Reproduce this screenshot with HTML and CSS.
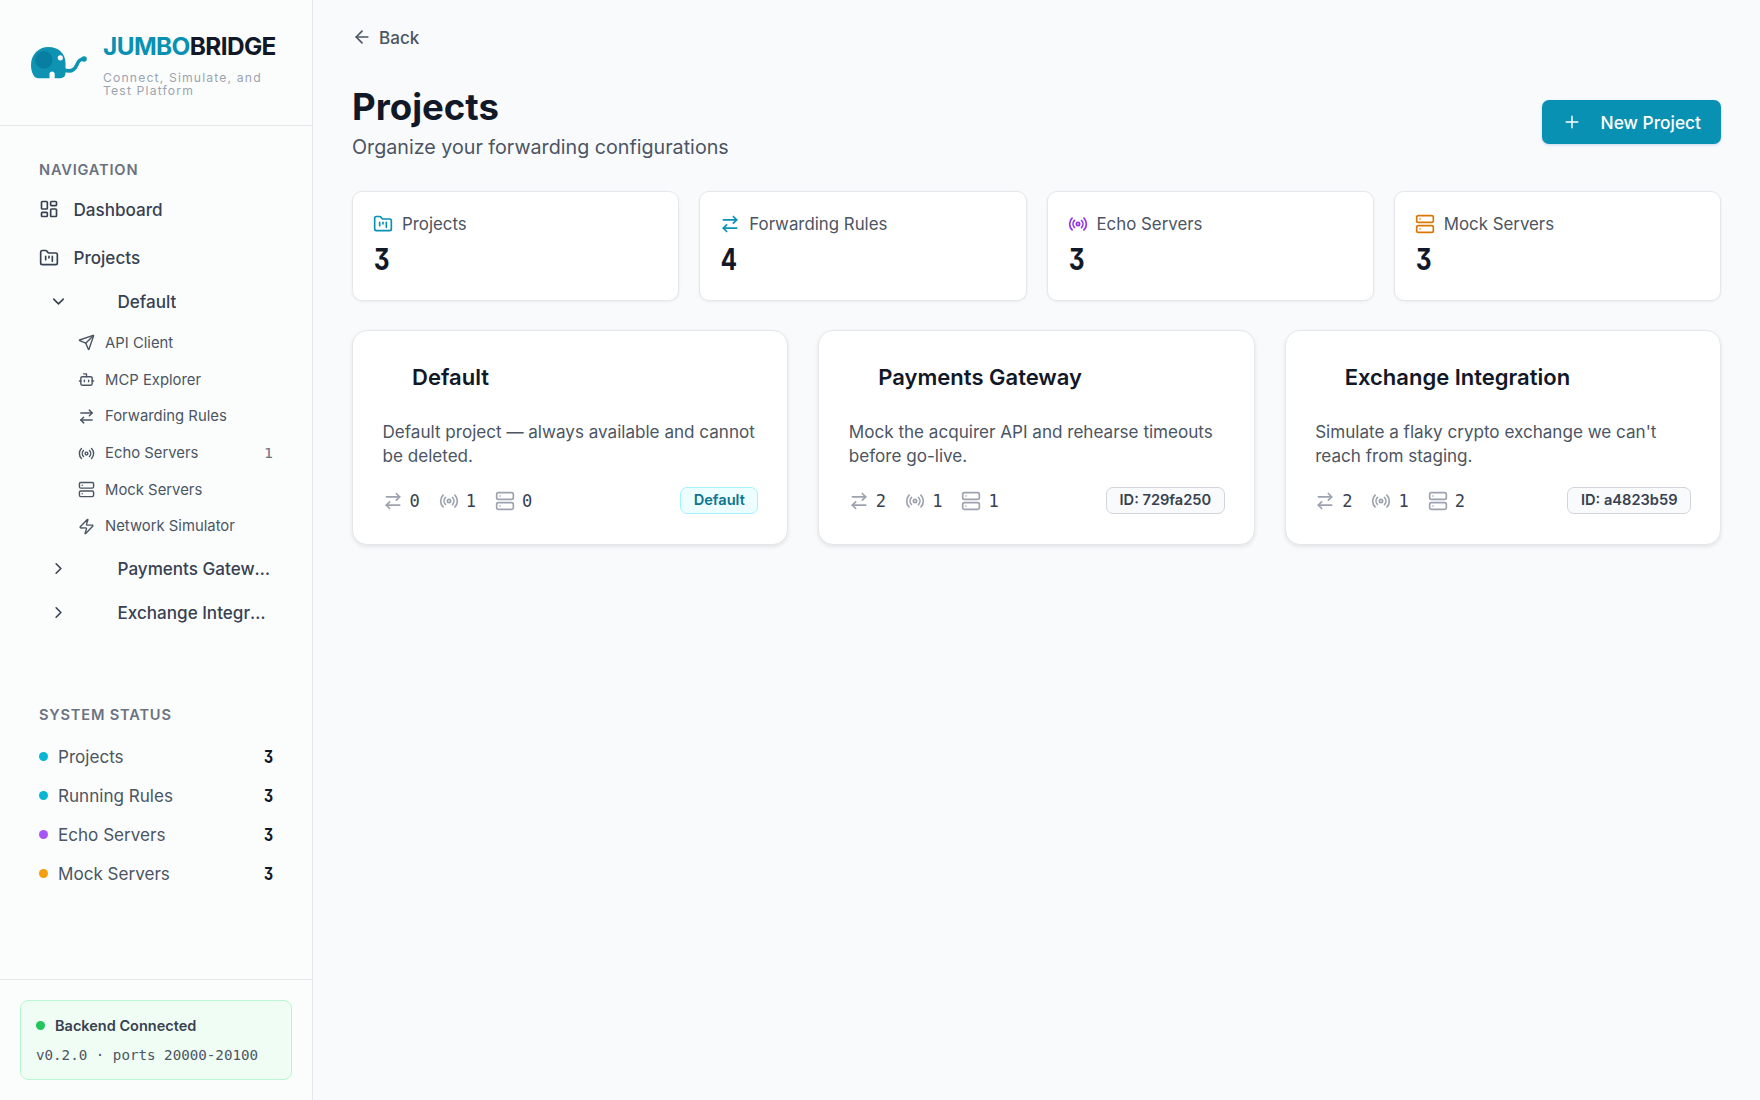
FILE: index.html
```html
<!DOCTYPE html>
<html lang="en">
<head>
    <meta charset="UTF-8">
    <meta name="viewport" content="width=device-width, initial-scale=1.0">
    <title>JumboBridge - Projects</title>
    <link rel="stylesheet" href="styles.css">
</head>
<body>
    <!-- Icon definitions -->
    <svg class="sprite" xmlns="http://www.w3.org/2000/svg">
        <symbol id="i-dashboard" viewBox="0 0 24 24"><rect x="3" y="3" width="7" height="9" rx="1"/><rect x="14" y="3" width="7" height="5" rx="1"/><rect x="14" y="12" width="7" height="9" rx="1"/><rect x="3" y="16" width="7" height="5" rx="1"/></symbol>
        <symbol id="i-folder" viewBox="0 0 24 24"><path d="M4 20h16a2 2 0 0 0 2-2V8a2 2 0 0 0-2-2h-7.93a2 2 0 0 1-1.66-.9l-.82-1.2A2 2 0 0 0 7.93 3H4a2 2 0 0 0-2 2v13c0 1.1.9 2 2 2Z"/><path d="M8 10v4M12 10v2M16 10v6"/></symbol>
        <symbol id="i-send" viewBox="0 0 24 24"><path d="M14.536 21.686a.5.5 0 0 0 .937-.024l6.5-19a.496.496 0 0 0-.635-.635l-19 6.5a.5.5 0 0 0-.024.937l7.93 3.18a2 2 0 0 1 1.112 1.11z"/><path d="m21.854 2.147-10.94 10.939"/></symbol>
        <symbol id="i-bot" viewBox="0 0 24 24"><path d="M12 8V4H8"/><rect x="4" y="8" width="16" height="12" rx="2"/><path d="M2 14h2M20 14h2M15 13v2M9 13v2"/></symbol>
        <symbol id="i-swap" viewBox="0 0 24 24"><path d="m16 3 4 4-4 4"/><path d="M20 7H4"/><path d="m8 21-4-4 4-4"/><path d="M4 17h16"/></symbol>
        <symbol id="i-radio" viewBox="0 0 24 24"><path d="M4.9 19.1C1 15.2 1 8.8 4.9 4.9"/><path d="M7.8 16.2c-2.3-2.3-2.3-6.1 0-8.5"/><circle cx="12" cy="12" r="2"/><path d="M16.2 7.8c2.3 2.3 2.3 6.1 0 8.5"/><path d="M19.1 4.9C23 8.8 23 15.1 19.1 19"/></symbol>
        <symbol id="i-server" viewBox="0 0 24 24"><rect x="2" y="2" width="20" height="8" rx="2"/><rect x="2" y="14" width="20" height="8" rx="2"/><path d="M6 6h.01M6 18h.01"/></symbol>
        <symbol id="i-zap" viewBox="0 0 24 24"><path d="M4 14a1 1 0 0 1-.78-1.63l9.9-10.2a.5.5 0 0 1 .86.46l-1.92 6.02A1 1 0 0 0 13 10h7a1 1 0 0 1 .78 1.63l-9.9 10.2a.5.5 0 0 1-.86-.46l1.92-6.02A1 1 0 0 0 11 14z"/></symbol>
        <symbol id="i-down" viewBox="0 0 24 24"><path d="m6 9 6 6 6-6"/></symbol>
        <symbol id="i-right" viewBox="0 0 24 24"><path d="m9 18 6-6-6-6"/></symbol>
        <symbol id="i-back" viewBox="0 0 24 24"><path d="m12 19-7-7 7-7"/><path d="M19 12H5"/></symbol>
        <symbol id="i-plus" viewBox="0 0 24 24"><path d="M5 12h14M12 5v14"/></symbol>
    </svg>

    <div class="app">
        <aside class="sidebar">
            <div class="brand">
                <svg class="logo" viewBox="0 0 58 36">
                    <path class="trunk" d="M33 23.5C41 27 44.500 24 46.500 19.500C48.500 15 50 13 54 13"/>
                    <circle class="skin" cx="54" cy="13" r="2.800"/>
                    <path class="skin" d="M5.500 31.500C2.500 29 1 24 1 19C1 8.500 8.500 1 18.500 1C28.500 1 35.500 7.500 35.500 17V27C35.500 30 33.500 32.200 30.500 32.200H24.700V28C24.700 24.500 19.500 24.500 19.500 28V32.200H9C7.500 32.200 6.500 32.200 5.500 31.500Z"/>
                    <circle class="ear" cx="13.800" cy="13.800" r="8.800"/>
                    <circle class="eye" cx="30.300" cy="11.800" r="2.600"/>
                </svg>
                <div class="brand-text">
                    <div class="brand-name"><span>JUMBO</span>BRIDGE</div>
                    <div class="tagline">Connect, Simulate, and Test Platform</div>
                </div>
            </div>

            <nav class="nav">
                <h2 class="section-title">NAVIGATION</h2>
                <a class="nav-item"><svg class="icon"><use href="#i-dashboard"/></svg>Dashboard</a>
                <a class="nav-item"><svg class="icon"><use href="#i-folder"/></svg>Projects</a>
                <div class="tree">
                    <a class="tree-item"><svg class="icon"><use href="#i-down"/></svg><span>Default</span></a>
                    <div class="children">
                        <a class="child"><svg class="icon"><use href="#i-send"/></svg>API Client</a>
                        <a class="child"><svg class="icon"><use href="#i-bot"/></svg>MCP Explorer</a>
                        <a class="child"><svg class="icon"><use href="#i-swap"/></svg>Forwarding Rules</a>
                        <a class="child"><svg class="icon"><use href="#i-radio"/></svg>Echo Servers<span class="count">1</span></a>
                        <a class="child"><svg class="icon"><use href="#i-server"/></svg>Mock Servers</a>
                        <a class="child"><svg class="icon"><use href="#i-zap"/></svg>Network Simulator</a>
                    </div>
                    <a class="tree-item"><svg class="icon"><use href="#i-right"/></svg><span>Payments Gateway</span></a>
                    <a class="tree-item"><svg class="icon"><use href="#i-right"/></svg><span>Exchange Integration</span></a>
                </div>
            </nav>

            <section class="status">
                <h2 class="section-title">SYSTEM STATUS</h2>
                <div class="status-row"><i class="dot cyan"></i>Projects<b>3</b></div>
                <div class="status-row"><i class="dot cyan"></i>Running Rules<b>3</b></div>
                <div class="status-row"><i class="dot purple"></i>Echo Servers<b>3</b></div>
                <div class="status-row"><i class="dot amber"></i>Mock Servers<b>3</b></div>
            </section>

            <div class="sidebar-footer">
                <div class="backend">
                    <div class="backend-state"><i class="dot green"></i>Backend Connected</div>
                    <div class="backend-info">v0.2.0 · ports 20000-20100</div>
                </div>
            </div>
        </aside>

        <main class="main">
            <a class="back"><svg class="icon"><use href="#i-back"/></svg>Back</a>

            <header class="page-header">
                <div>
                    <h1>Projects</h1>
                    <p>Organize your forwarding configurations</p>
                </div>
                <button class="btn-new"><svg class="icon"><use href="#i-plus"/></svg>New Project</button>
            </header>

            <div class="stats">
                <div class="stat">
                    <div class="stat-label"><svg class="icon teal"><use href="#i-folder"/></svg>Projects</div>
                    <div class="stat-value">3</div>
                </div>
                <div class="stat">
                    <div class="stat-label"><svg class="icon teal"><use href="#i-swap"/></svg>Forwarding Rules</div>
                    <div class="stat-value">4</div>
                </div>
                <div class="stat">
                    <div class="stat-label"><svg class="icon violet"><use href="#i-radio"/></svg>Echo Servers</div>
                    <div class="stat-value">3</div>
                </div>
                <div class="stat">
                    <div class="stat-label"><svg class="icon orange"><use href="#i-server"/></svg>Mock Servers</div>
                    <div class="stat-value">3</div>
                </div>
            </div>

            <div class="projects">
                <article class="project">
                    <h3>Default</h3>
                    <p>Default project — always available and cannot be deleted.</p>
                    <div class="project-footer">
                        <span class="metric"><svg class="icon"><use href="#i-swap"/></svg>0</span>
                        <span class="metric"><svg class="icon"><use href="#i-radio"/></svg>1</span>
                        <span class="metric"><svg class="icon"><use href="#i-server"/></svg>0</span>
                        <span class="badge badge-default">Default</span>
                    </div>
                </article>
                <article class="project">
                    <h3>Payments Gateway</h3>
                    <p>Mock the acquirer API and rehearse timeouts before go-live.</p>
                    <div class="project-footer">
                        <span class="metric"><svg class="icon"><use href="#i-swap"/></svg>2</span>
                        <span class="metric"><svg class="icon"><use href="#i-radio"/></svg>1</span>
                        <span class="metric"><svg class="icon"><use href="#i-server"/></svg>1</span>
                        <span class="badge">ID: 729fa250</span>
                    </div>
                </article>
                <article class="project">
                    <h3>Exchange Integration</h3>
                    <p>Simulate a flaky crypto exchange we can't reach from staging.</p>
                    <div class="project-footer">
                        <span class="metric"><svg class="icon"><use href="#i-swap"/></svg>2</span>
                        <span class="metric"><svg class="icon"><use href="#i-radio"/></svg>1</span>
                        <span class="metric"><svg class="icon"><use href="#i-server"/></svg>2</span>
                        <span class="badge">ID: a4823b59</span>
                    </div>
                </article>
            </div>
        </main>
    </div>
</body>
</html>
```
FILE: styles.css
```css
* {
    box-sizing: border-box;
}
body {
    margin: 0;
    font-family: Inter, "Liberation Sans", sans-serif;
    font-size: 17.08px;
    color: #374151;
    background-color: #f9fafc;
}
h1, h2, h3, p {
    margin: 0;
}
.sprite {
    display: none;
}
.icon {
    width: 20px;
    height: 20px;
    flex-shrink: 0;
    fill: none;
    stroke: currentColor;
    stroke-width: 2;
    stroke-linecap: round;
    stroke-linejoin: round;
}
.app {
    display: flex;
    height: 100vh;
}

/* Sidebar */
.sidebar {
    display: flex;
    flex-direction: column;
    width: 313px;
    flex-shrink: 0;
    background-color: #fbfdfd;
    border-right: 1px solid #e5e7eb;
}
.brand {
    display: flex;
    align-items: center;
    height: 126px;
    padding: 0 29px 0 30px;
    border-bottom: 1px solid #e5e7eb;
}
.logo {
    width: 58px;
    height: 36px;
    margin-top: 2px;
    flex-shrink: 0;
}
.skin {
    fill: #0e93b3;
}
.trunk {
    fill: none;
    stroke: #0e93b3;
    stroke-width: 3.6;
    stroke-linecap: round;
}
.ear {
    fill: #087ea1;
}
.eye {
    fill: #fff;
}
.brand-text {
    margin-left: 15px;
}
.brand-name {
    font-size: 24.4px;
    line-height: 36px;
    font-weight: 700;
    letter-spacing: -0.61px;
    color: #111827;
}
.brand-name span {
    color: #0891b2;
}
.tagline {
    margin-top: 8px;
    font-size: 12.2px;
    line-height: 12.2px;
    letter-spacing: 1.15px;
    color: #9ca3af;
}
.section-title {
    font-size: 14.64px;
    line-height: 20px;
    font-weight: 600;
    letter-spacing: 0.8px;
    color: #6b7280;
}
.nav {
    padding: 34px 39px 0;
}
.nav-item {
    display: flex;
    align-items: center;
    gap: 14.5px;
    height: 44px;
    margin-bottom: 4.6px;
    font-weight: 500;
}
.nav .section-title {
    margin-bottom: 7px;
}
.tree {
    margin-top: -4.6px;
}
.tree-item {
    display: flex;
    align-items: center;
    height: 44px;
    padding-left: 10px;
    font-weight: 500;
}
.tree-item .icon {
    width: 19px;
    height: 19px;
}
.tree-item span {
    max-width: 154px;
    margin-left: 49.5px;
    overflow: hidden;
    text-overflow: ellipsis;
    white-space: nowrap;
}
.children {
    padding: 1px 0 2px;
}
.child {
    display: flex;
    align-items: center;
    gap: 10px;
    height: 36.7px;
    padding-left: 39px;
    font-size: 14.85px;
    color: #4b5563;
}
.child .icon {
    width: 17px;
    height: 17px;
}
.count {
    margin-left: auto;
    font-family: "DejaVu Sans Mono", monospace;
    color: #6b7280;
}
.status {
    margin-top: 70px;
    padding: 0 39px;
}
.status .section-title {
    margin-bottom: 12px;
}
.status-row {
    display: flex;
    align-items: center;
    height: 39.1px;
    color: #4b5563;
}
.status-row b {
    margin-left: auto;
    font-weight: 700;
    font-feature-settings: "cv09", "tnum";
    color: #111827;
    transform: scaleX(0.83);
    transform-origin: right;
}
.dot {
    width: 9px;
    height: 9px;
    margin-right: 10px;
    border-radius: 50%;
}
.cyan { background-color: #06b6d4; }
.purple { background-color: #a855f7; }
.amber { background-color: #f59e0b; }
.green { background-color: #22c55e; }
.sidebar-footer {
    margin-top: auto;
    padding: 20px;
    border-top: 1px solid #e5e7eb;
}
.backend {
    height: 80px;
    padding: 14px 15px;
    background-color: #f0fdf4;
    border: 1px solid #bbf7d0;
    border-radius: 8px;
}
.backend-state {
    display: flex;
    align-items: center;
    height: 20px;
    font-size: 14.5px;
    font-weight: 600;
}
.backend-info {
    margin-top: 10px;
    font-family: "DejaVu Sans Mono", monospace;
    font-size: 14.2px;
    line-height: 20px;
    white-space: nowrap;
    color: #4b5563;
}

/* Main content */
.main {
    flex: 1;
    padding: 22px 39px;
}
.back {
    display: flex;
    align-items: center;
    gap: 7px;
    height: 30px;
    font-weight: 500;
    color: #4b5563;
}
.page-header {
    display: flex;
    justify-content: space-between;
    align-items: center;
    height: 78px;
    margin-top: 31px;
}
h1 {
    padding-top: 2px;
    font-size: 36.6px;
    line-height: 44px;
    font-weight: 700;
    color: #111827;
}
.page-header p {
    margin-top: 4px;
    font-size: 19.7px;
    line-height: 29px;
    color: #4b5563;
}
.btn-new {
    display: flex;
    align-items: center;
    gap: 19px;
    height: 44px;
    padding: 0 20px;
    font: 500 17.35px Inter, "Liberation Sans", sans-serif;
    color: #fff;
    background-color: #0891b2;
    border: none;
    border-radius: 7px;
    box-shadow: 0 1px 3px rgba(8, 80, 178, 0.2);
}
.btn-new .icon {
    stroke-width: 1.75;
}
.stats {
    display: grid;
    grid-template-columns: repeat(4, 1fr);
    gap: 20px;
    margin-top: 30px;
}
.stat {
    height: 109.5px;
    padding: 20px;
    background-color: #fff;
    border: 1px solid #e5e7eb;
    border-radius: 10px;
    box-shadow: 0 1px 3px rgba(0, 0, 0, 0.06);
}
.stat-label {
    display: flex;
    align-items: center;
    gap: 9px;
    height: 24px;
    font-size: 16.85px;
    color: #4b5563;
}
.teal { color: #0891b2; }
.violet { color: #9333ea; }
.orange { color: #d97706; }
.stat-value {
    margin: 4px 0 0 1px;
    font-size: 29.3px;
    line-height: 39px;
    font-weight: 700;
    font-feature-settings: "cv09", "tnum";
    color: #111827;
    transform: scaleX(0.83);
    transform-origin: left;
}
.projects {
    display: grid;
    grid-template-columns: repeat(3, 1fr);
    gap: 30px;
    margin-top: 29px;
}
.project {
    height: 215.5px;
    padding: 29px 29px 0 29.5px;
    background-color: #fff;
    border: 1px solid #e5e7eb;
    border-radius: 15px;
    box-shadow: 0 2px 4px rgba(0, 0, 0, 0.09);
}
.project h3 {
    padding-left: 29.5px;
    font-size: 22px;
    line-height: 34px;
    font-weight: 600;
    color: #111827;
}
.project p {
    margin-top: 26px;
    line-height: 24.6px;
    color: #4b5563;
}
.project-footer {
    display: flex;
    align-items: center;
    gap: 19px;
    height: 26px;
    margin-top: 19px;
}
.metric {
    display: flex;
    align-items: center;
    gap: 7px;
    font-family: "DejaVu Sans Mono", monospace;
}
.metric .icon {
    color: #9ca3af;
}
.badge {
    margin-left: auto;
    padding: 0 12.5px;
    font-size: 14.64px;
    line-height: 25px;
    font-weight: 600;
    background-color: #f9fafb;
    border: 1px solid #d1d5db;
    border-radius: 7px;
}
.badge-default {
    color: #0e7490;
    background-color: #ecfeff;
    border-color: #a5f3fc;
}
```
